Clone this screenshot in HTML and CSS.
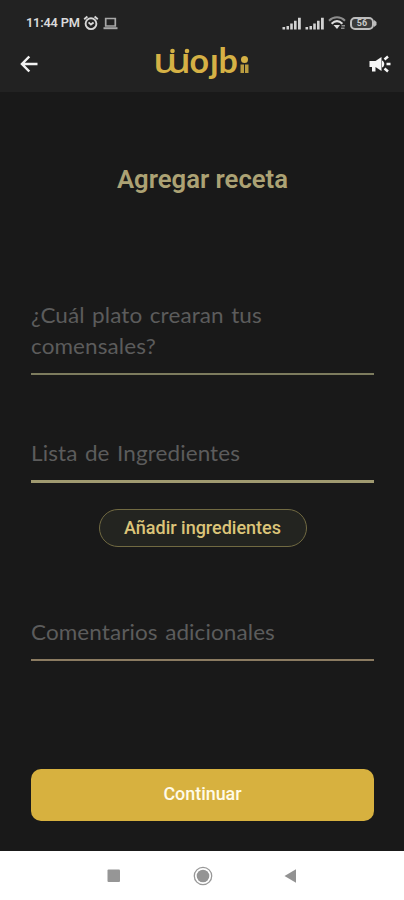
FILE: index.html
```html
<!DOCTYPE html>
<html lang="es">
<head>
<meta charset="utf-8">
<meta name="viewport" content="width=device-width, initial-scale=1">
<title>Agregar receta</title>
<link rel="stylesheet" href="styles.css">
</head>
<body>
<div class="screen">
  <header class="top">
    <div class="status">
      <div class="status-left">
        <span class="clock">11:44 PM</span>
        <svg class="alarm" width="16" height="16" viewBox="0 0 16 16" fill="none" stroke="#d6d6d6" stroke-width="1.9"><circle cx="8" cy="8.7" r="5.4"/><path d="M1.2 4.2 4.4 1.5M14.8 4.2 11.6 1.5M5.6 7.4 7.9 9.6 10.6 7.4"/></svg>
        <svg class="laptop" width="15" height="13" viewBox="0 0 15 13" fill="none" stroke="#a8a8a8" stroke-width="1.7"><path d="M2.7 9V1.5h9.6V9z"/><path d="M.5 11.2h14" stroke-width="2"/></svg>
      </div>
      <div class="status-right">
        <svg width="20" height="13" viewBox="0 0 20 13" fill="#d2d2d2"><path d="M.5 10h2.6v2.5H.5zM4.5 9H7v3.5H4.5zM8.2 6.5h2.6v6H8.2zM12 3.8h2.6v8.7H12zM16 .8h2.8v11.7H16z"/></svg>
        <svg width="20" height="13" viewBox="0 0 20 13" fill="#d2d2d2"><path d="M.5 10h2.6v2.5H.5zM4.5 9H7v3.5H4.5zM8.2 6.5h2.6v6H8.2zM12 3.8h2.6v8.7H12zM16 .8h2.8v11.7H16z"/></svg>
        <svg class="wifi" width="19" height="14" viewBox="0 0 19 14" fill="none" stroke-width="2"><path d="M1 4.8C5.5.2 12.500.2 17 4.800" stroke="#8c8c8c"/><path d="M3.600 7.800C7 4.500 11 4.500 14.400 7.800" stroke="#dedede"/><path d="M5.500 9h6.500l-3 4z" fill="#dedede"/><path d="M13.500 9.800h3.500M13 12.200h3.500" stroke="#8c8c8c" stroke-width="1.500"/></svg>
        <div class="battery"><span>56</span><svg width="3" height="7" viewBox="0 0 3 7"><path d="M0 0 2.500 2v3L0 7z" fill="#bdbdbd"/></svg></div>
      </div>
    </div>
    <div class="appbar">
      <svg class="back" width="18" height="18" viewBox="0 0 18 18" fill="none" stroke="#f2f2f2" stroke-width="2.500"><path d="M9.300 1.500 2 9l7.300 7.500M2 9h15.500"/></svg>
      <svg class="logo" width="98" height="46" viewBox="0 0 98 46" fill="#d5b145" role="img" aria-label="wojbi">
        <text class="wordmark" y="27"><tspan class="wide" x="0" textLength="38" lengthAdjust="spacingAndGlyphs">ɯ</tspan><tspan x="36.500">o</tspan><tspan x="57">ȷ</tspan><tspan x="65.500">b</tspan></text>
        <circle cx="19.500" cy="5" r="2.300"/><circle cx="34" cy="5" r="2.300"/>
        <circle cx="91.500" cy="13.500" r="3.500"/><path d="M87.500 18.500h3.500v8.500h-3.500zM92 18.500h3.500v8.500H92z" opacity=".85"/>
      </svg>
      <svg class="horn" width="22" height="18" viewBox="0 0 22 18" fill="#f7f7f7"><path d="M.5 6h6L12.500 2v14L6.500 12v4.500H3V12H.5z"/><path d="M13 5.500c3 1 3 6 0 7z"/><path d="M15.500 4.500 19 1.500M17.500 9h4M15.500 13.500 19 16.500" fill="none" stroke="#f7f7f7" stroke-width="2.500"/></svg>
    </div>
  </header>

  <main class="content">
    <h1>Agregar receta</h1>
    <div class="field dish"><span>¿Cuál plato crearan tus</span><br><span>comensales?</span></div>
    <div class="field list"><span>Lista de Ingredientes</span></div>
    <button class="add">Añadir ingredientes</button>
    <div class="field notes"><span>Comentarios adicionales</span></div>
    <button class="next">Continuar</button>
  </main>

  <nav class="navbar">
    <svg width="14" height="14" viewBox="0 0 14 14"><rect x=".5" y=".5" width="12.500" height="12.500" rx="1" fill="#969696"/></svg>
    <svg width="20" height="20" viewBox="0 0 20 20"><circle cx="10" cy="10" r="8.700" fill="none" stroke="#989898" stroke-width="1.300"/><circle cx="10" cy="10" r="6.300" fill="#949494"/></svg>
    <svg width="13" height="14" viewBox="0 0 13 14"><path d="M.5 7 12 .3v13.400z" fill="#929292"/></svg>
  </nav>
</div>
</body>
</html>
```
FILE: styles.css
```css
* { box-sizing: border-box; }
body { margin: 0; background: #191919; font-family: Roboto, sans-serif; }
svg { display: block; flex: none; }
button { display: block; font-family: inherit; padding: 0; }

.screen { width: 404px; height: 900px; display: flex; flex-direction: column; background: #191919; }

.top { height: 92px; flex: none; background: #222; }
.status { height: 46px; padding: 0 27px 0 26px; display: flex; justify-content: space-between; align-items: center; }
.status-left, .status-right { display: flex; align-items: center; }
.clock { font-size: 12.800px; font-weight: 600; line-height: 16px; color: #dadada; white-space: nowrap; width: 57px; letter-spacing: -.2px; }
.laptop { margin-left: 4px; }
.status-right { gap: 3px; }
.battery { display: flex; align-items: center; }
.battery span { width: 24px; height: 13px; border: 2px solid #bdbdbd; border-radius: 5px; background: #3a3a3a; color: #c8c8c8; font-size: 9px; font-weight: 700; line-height: 9px; text-align: center; }

.appbar { height: 46px; display: flex; align-items: flex-start; justify-content: space-between; padding: 0 13px 0 20px; }
.back { margin-top: 9px; }
.horn { margin-top: 9px; }
.logo { margin-right: 4px; overflow: visible; }
.wordmark { font-family: Lato, sans-serif; font-weight: 700; font-size: 34px; }
.wide { font-family: "Noto Sans", sans-serif; font-weight: 500; }

.content { flex: 1; padding: 0 30px 0 31px; display: flex; flex-direction: column; }
h1 { margin: 71px 0 0; font-size: 25.700px; line-height: 32px; font-weight: 600; color: #aca274; text-align: center; }
.field { color: #5c5c5c; font-family: Lato, sans-serif; font-size: 21px; line-height: 31px; white-space: nowrap; }
.field span { display: inline-block; letter-spacing: .1px; word-spacing: 1.500px; transform: scaleX(1.070); transform-origin: left; }
.dish { margin-top: 104px; height: 76px; border-bottom: 2px solid #7d7c5e; }
.list { margin-top: 62px; height: 46px; border-bottom: 3px solid #a09a70; }
.add { margin: 26px auto 0; width: 208px; height: 38px; border: 1px solid #716a42; border-radius: 19px; background: #232420; color: #dcc479; font-size: 18px; font-weight: 500; line-height: 34px; }
.notes { margin-top: 69px; height: 45px; border-bottom: 2px solid #8b7b61; }
.next { margin-top: 108px; width: 343px; height: 52px; border: 0; border-radius: 10px; background: #d7b13f; color: #fffbe9; font-size: 17.900px; font-weight: 500; line-height: 50px; padding-bottom: 2px; }

.navbar { height: 49px; flex: none; background: #fff; display: flex; align-items: center; justify-content: space-between; padding: 0 107px; }
```
